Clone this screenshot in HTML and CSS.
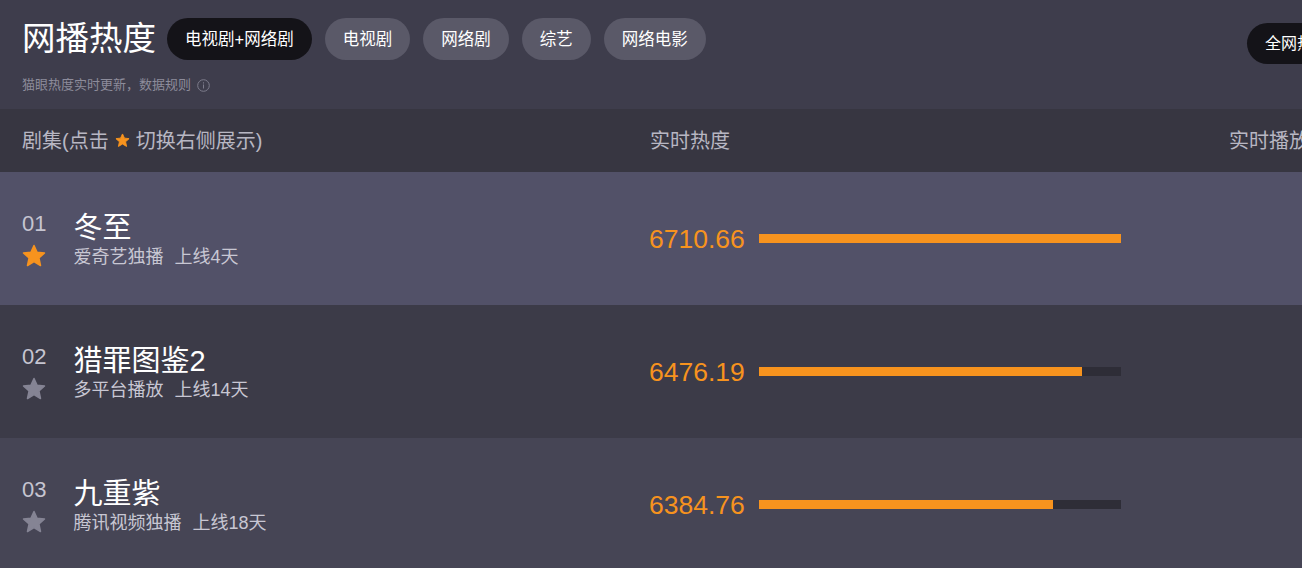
FILE: index.html
```html
<!DOCTYPE html>
<html lang="zh-CN">
<head>
<meta charset="utf-8">
<title>网播热度</title>
<link rel="stylesheet" href="styles.css">
</head>
<body>
<div class="page">
  <header class="top">
    <div class="top-row">
      <h1 class="title">网播热度</h1>
      <nav class="chips">
        <span class="chip active">电视剧+网络剧</span>
        <span class="chip">电视剧</span>
        <span class="chip">网络剧</span>
        <span class="chip">综艺</span>
        <span class="chip">网络电影</span>
      </nav>
      <span class="all-btn">全网热度</span>
    </div>
    <p class="note">猫眼热度实时更新，数据规则
      <svg class="info" width="13" height="13" viewBox="0 0 13 13"><circle cx="6.5" cy="6.5" r="5.8" fill="none" stroke="#7d7c8c" stroke-width="1"/><rect x="6" y="5.5" width="1" height="4" fill="#7d7c8c"/><rect x="6" y="3.3" width="1" height="1.2" fill="#7d7c8c"/></svg>
    </p>
  </header>

  <div class="thead">
    <div class="th">剧集(点击
      <svg class="hstar" width="15" height="15" viewBox="0 0 24 24"><polygon points="12,1.5 15.1,8.2 22.5,9 16.9,14 18.5,21.5 12,17.6 5.5,21.5 7.1,14 1.5,9 8.9,8.2" fill="#f7931e" stroke="#f7931e" stroke-width="1.5" stroke-linejoin="round"/></svg>
      切换右侧展示)</div>
    <div class="th">实时热度</div>
    <div class="th">实时播放热度</div>
  </div>

  <div class="row r1">
    <div class="show">
      <div class="rank">
        <span class="num">01</span>
        <svg class="star" width="24" height="24" viewBox="0 0 24 24"><polygon points="12,1.5 15.1,8.2 22.5,9 16.9,14 18.5,21.5 12,17.6 5.5,21.5 7.1,14 1.5,9 8.9,8.2" fill="#f7931e" stroke="#f7931e" stroke-width="1.5" stroke-linejoin="round"/></svg>
      </div>
      <div class="info-col">
        <div class="name">冬至</div>
        <div class="meta"><span>爱奇艺独播</span><span>上线4天</span></div>
      </div>
    </div>
    <div class="heat">
      <span class="score">6710.66</span>
      <div class="track"><div class="fill" style="width:100%"></div></div>
    </div>
    <div class="play"></div>
  </div>

  <div class="row r2">
    <div class="show">
      <div class="rank">
        <span class="num">02</span>
        <svg class="star" width="24" height="24" viewBox="0 0 24 24"><polygon points="12,1.5 15.1,8.2 22.5,9 16.9,14 18.5,21.5 12,17.6 5.5,21.5 7.1,14 1.5,9 8.9,8.2" fill="#858494" stroke="#858494" stroke-width="1.5" stroke-linejoin="round"/></svg>
      </div>
      <div class="info-col">
        <div class="name">猎罪图鉴2</div>
        <div class="meta"><span>多平台播放</span><span>上线14天</span></div>
      </div>
    </div>
    <div class="heat">
      <span class="score">6476.19</span>
      <div class="track"><div class="fill" style="width:89.2%"></div></div>
    </div>
    <div class="play"></div>
  </div>

  <div class="row r3">
    <div class="show">
      <div class="rank">
        <span class="num">03</span>
        <svg class="star" width="24" height="24" viewBox="0 0 24 24"><polygon points="12,1.5 15.1,8.2 22.5,9 16.9,14 18.5,21.5 12,17.6 5.5,21.5 7.1,14 1.5,9 8.9,8.2" fill="#858494" stroke="#858494" stroke-width="1.5" stroke-linejoin="round"/></svg>
      </div>
      <div class="info-col">
        <div class="name">九重紫</div>
        <div class="meta"><span>腾讯视频独播</span><span>上线18天</span></div>
      </div>
    </div>
    <div class="heat">
      <span class="score">6384.76</span>
      <div class="track"><div class="fill" style="width:81.2%"></div></div>
    </div>
    <div class="play"></div>
  </div>
</div>
</body>
</html>
```

FILE: styles.css
```css
* { box-sizing: border-box; }
html, body {
  margin: 0;
  padding: 0;
  overflow: hidden;
  background: #3e3d4c;
}
body {
  font-family: "Liberation Sans", "Noto Sans CJK SC", sans-serif;
  color: #fff;
}
.page {
  width: 1440px;
}
.top {
  height: 109px;
  background: #3e3d4c;
  padding: 18px 0 0 22px;
}
.top-row {
  display: flex;
  align-items: center;
  height: 42px;
}
.title {
  margin: 0 11px 0 0;
  font-size: 33.5px;
  font-weight: normal;
  line-height: 42px;
  color: #fff;
}
.chips {
  display: flex;
  gap: 13px;
}
.chip {
  height: 42px;
  line-height: 42px;
  padding: 0 18px;
  border-radius: 21px;
  background: #5a5968;
  font-size: 16.5px;
  color: #fff;
  white-space: nowrap;
}
.chip.active {
  background: #141318;
}
.all-btn {
  margin-left: auto;
  margin-right: 93px;
  margin-top: 8px;
  height: 41px;
  line-height: 41px;
  padding: 0 18px;
  border-radius: 21px;
  background: #141318;
  font-size: 16px;
  color: #fff;
  white-space: nowrap;
}
.note {
  margin: 16px 0 0;
  font-size: 13px;
  line-height: 18px;
  color: #8d8c9b;
  display: flex;
  align-items: center;
  gap: 6px;
}
.info { display: block; }

.thead {
  height: 63px;
  background: #373641;
  display: grid;
  grid-template-columns: 627px 580px 1fr;
  padding-left: 22px;
  padding-bottom: 3px;
  align-items: center;
}
.th {
  font-size: 20px;
  color: #b8b7c3;
  display: flex;
  align-items: center;
  white-space: nowrap;
}
.th:nth-child(2) { padding-left: 1px; }
.hstar { margin: 3px 6px 0 6px; }

.row {
  height: 133px;
  display: grid;
  grid-template-columns: 627px 580px 1fr;
  padding-left: 22px;
  align-items: center;
}
.r1 { background: #525168; }
.r2 { background: #3c3b48; }
.r3 { background: #464555; }

.show {
  display: flex;
  align-items: center;
  gap: 27px;
}
.rank {
  display: flex;
  flex-direction: column;
  align-items: flex-start;
  gap: 7px;
  margin-top: 2px;
}
.num {
  font-size: 22px;
  line-height: 26px;
  color: #c6c5d1;
}
.star { display: block; }
.info-col {
  display: flex;
  flex-direction: column;
  margin-top: 3px;
}
.name {
  font-size: 29px;
  line-height: 34px;
  color: #fff;
}
.meta {
  font-size: 18px;
  line-height: 24px;
  color: #c8c7d3;
  display: flex;
  gap: 11px;
}
.heat {
  display: flex;
  align-items: center;
  gap: 14px;
}
.score {
  font-size: 26.5px;
  color: #f7931e;
  line-height: 30px;
}
.track {
  width: 362px;
  height: 9px;
  background: #2e2d37;
}
.fill {
  height: 100%;
  background: #f7931e;
}
```
